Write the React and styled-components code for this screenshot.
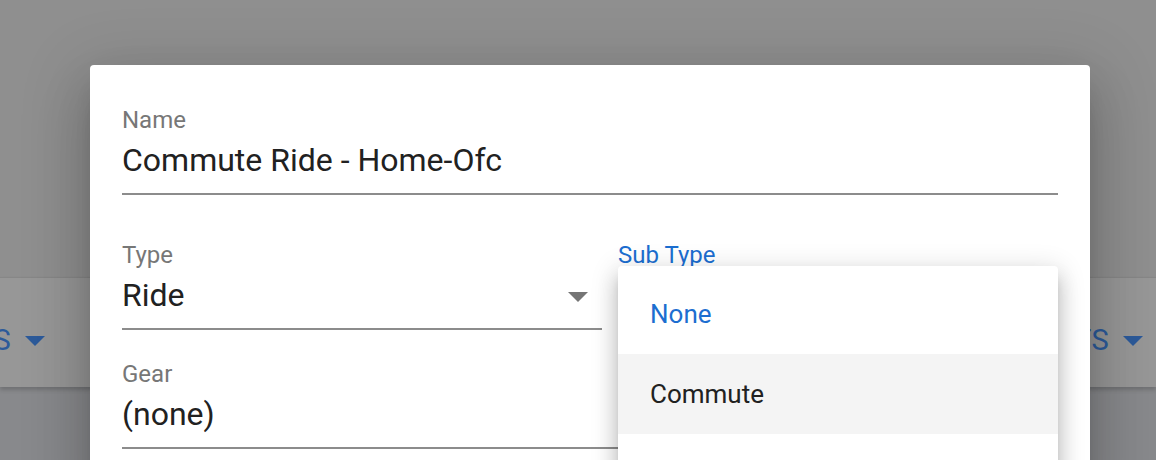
import styled, { createGlobalStyle } from "styled-components";

const GlobalStyle = createGlobalStyle`
  html, body {
    margin: 0;
    padding: 0;
    overflow: hidden;
    font-family: Roboto, "Noto Sans", "Liberation Sans", sans-serif;
  }
`;

const BLUE = "#1c6ed0";

const Page = styled.div`
  position: relative;
  width: 1156px;
  height: 460px;
  overflow: hidden;
  display: flex;
  flex-direction: column;
  background: #89898c;
`;

const TopArea = styled.div`
  height: 277px;
  background: #8f8f8f;
`;

const TabBar = styled.div`
  height: 110px;
  border-top: 1px solid #878787;
  background: #979797;
  box-shadow: 0 3px 4px rgba(0, 0, 0, 0.18);
  display: flex;
  align-items: center;
  justify-content: space-between;
  padding: 14px 13px 0 0;
  box-sizing: border-box;
  position: relative;
  z-index: 1;
`;

const Tab = styled.div`
  width: 45px;
  display: flex;
  align-items: center;
  justify-content: flex-end;
  gap: 14px;
  white-space: nowrap;
  color: #2c5a9a;
  font-size: 29px;
  letter-spacing: 0.3px;
`;

const LowerArea = styled.div`
  flex: 1;
  background: #88898c;
`;

const Dialog = styled.div`
  position: absolute;
  left: 90px;
  top: 65px;
  width: 1000px;
  height: 440px;
  box-sizing: border-box;
  background: #fff;
  border-radius: 4px;
  box-shadow: 0 16px 22px -10px rgba(0, 0, 0, 0.2),
    0 34px 54px 4px rgba(0, 0, 0, 0.14), 0 12px 64px 12px rgba(0, 0, 0, 0.12);
  padding: 43px 32px 0;
  display: flex;
  flex-direction: column;
  z-index: 2;
`;

const Row = styled.div`
  display: grid;
  grid-template-columns: 480px 1fr;
  gap: 16px;
  margin-bottom: ${({ $mb }) => $mb || 0}px;
`;

const Field = styled.div`
  display: flex;
  flex-direction: column;
  border-bottom: 2px solid ${({ $focused }) => ($focused ? BLUE : "#8c8c8c")};
  margin-bottom: ${({ $mb }) => $mb || 0}px;
`;

const Label = styled.div`
  font-size: 24px;
  line-height: 24px;
  color: ${({ $focused }) => ($focused ? BLUE : "#777")};
`;

const Value = styled.div`
  display: flex;
  align-items: center;
  justify-content: space-between;
  margin-top: 9px;
  padding-bottom: 14px;
  min-height: 38px;
  font-size: 32px;
  line-height: 38px;
  color: #212121;
`;

const Arrow = styled.svg`
  flex: none;
  margin: 3px ${({ $mr }) => $mr || 0}px 0 0;
`;

const Menu = styled.ul`
  position: absolute;
  left: 618px;
  top: 266px;
  width: 440px;
  min-height: 240px;
  margin: 0;
  padding: 8px 0;
  list-style: none;
  background: #fff;
  border-radius: 4px;
  box-shadow: 0 8px 10px -5px rgba(0, 0, 0, 0.2),
    0 14px 20px 2px rgba(0, 0, 0, 0.14), 0 5px 26px 4px rgba(0, 0, 0, 0.12);
  z-index: 3;
`;

const MenuItem = styled.li`
  height: 80px;
  display: flex;
  align-items: center;
  padding: 0 32px;
  font-size: 26px;
  color: ${({ $selected }) => ($selected ? BLUE : "#212121")};
  background: ${({ $hover }) => ($hover ? "#f4f4f4" : "transparent")};
`;

const DropArrow = ({ color, mr }) => (
  <Arrow width="20" height="10" viewBox="0 0 20 10" $mr={mr}>
    <path d="M0 0 L10 10 L20 0 Z" fill={color} />
  </Arrow>
);

const App = () => {
  return (
    <>
      <GlobalStyle />
      <Page>
        <TopArea />
        <TabBar>
          <Tab>
            <span>ACTIVITY TYPES</span>
            <DropArrow color="#2c5a9a" />
          </Tab>
          <Tab>
            <span>STATS</span>
            <DropArrow color="#2c5a9a" />
          </Tab>
        </TabBar>
        <LowerArea />

        <Dialog>
          <Field $mb={48}>
            <Label>Name</Label>
            <Value>Commute Ride - Home-Ofc</Value>
          </Field>
          <Row $mb={32}>
            <Field>
              <Label>Type</Label>
              <Value>
                Ride
                <DropArrow color="#757575" mr={14} />
              </Value>
            </Field>
            <Field $focused>
              <Label $focused>Sub Type</Label>
              <Value />
            </Field>
          </Row>
          <Field>
            <Label>Gear</Label>
            <Value>(none)</Value>
          </Field>
        </Dialog>

        <Menu>
          <MenuItem $selected>None</MenuItem>
          <MenuItem $hover>Commute</MenuItem>
        </Menu>
      </Page>
    </>
  );
};

export default App;
